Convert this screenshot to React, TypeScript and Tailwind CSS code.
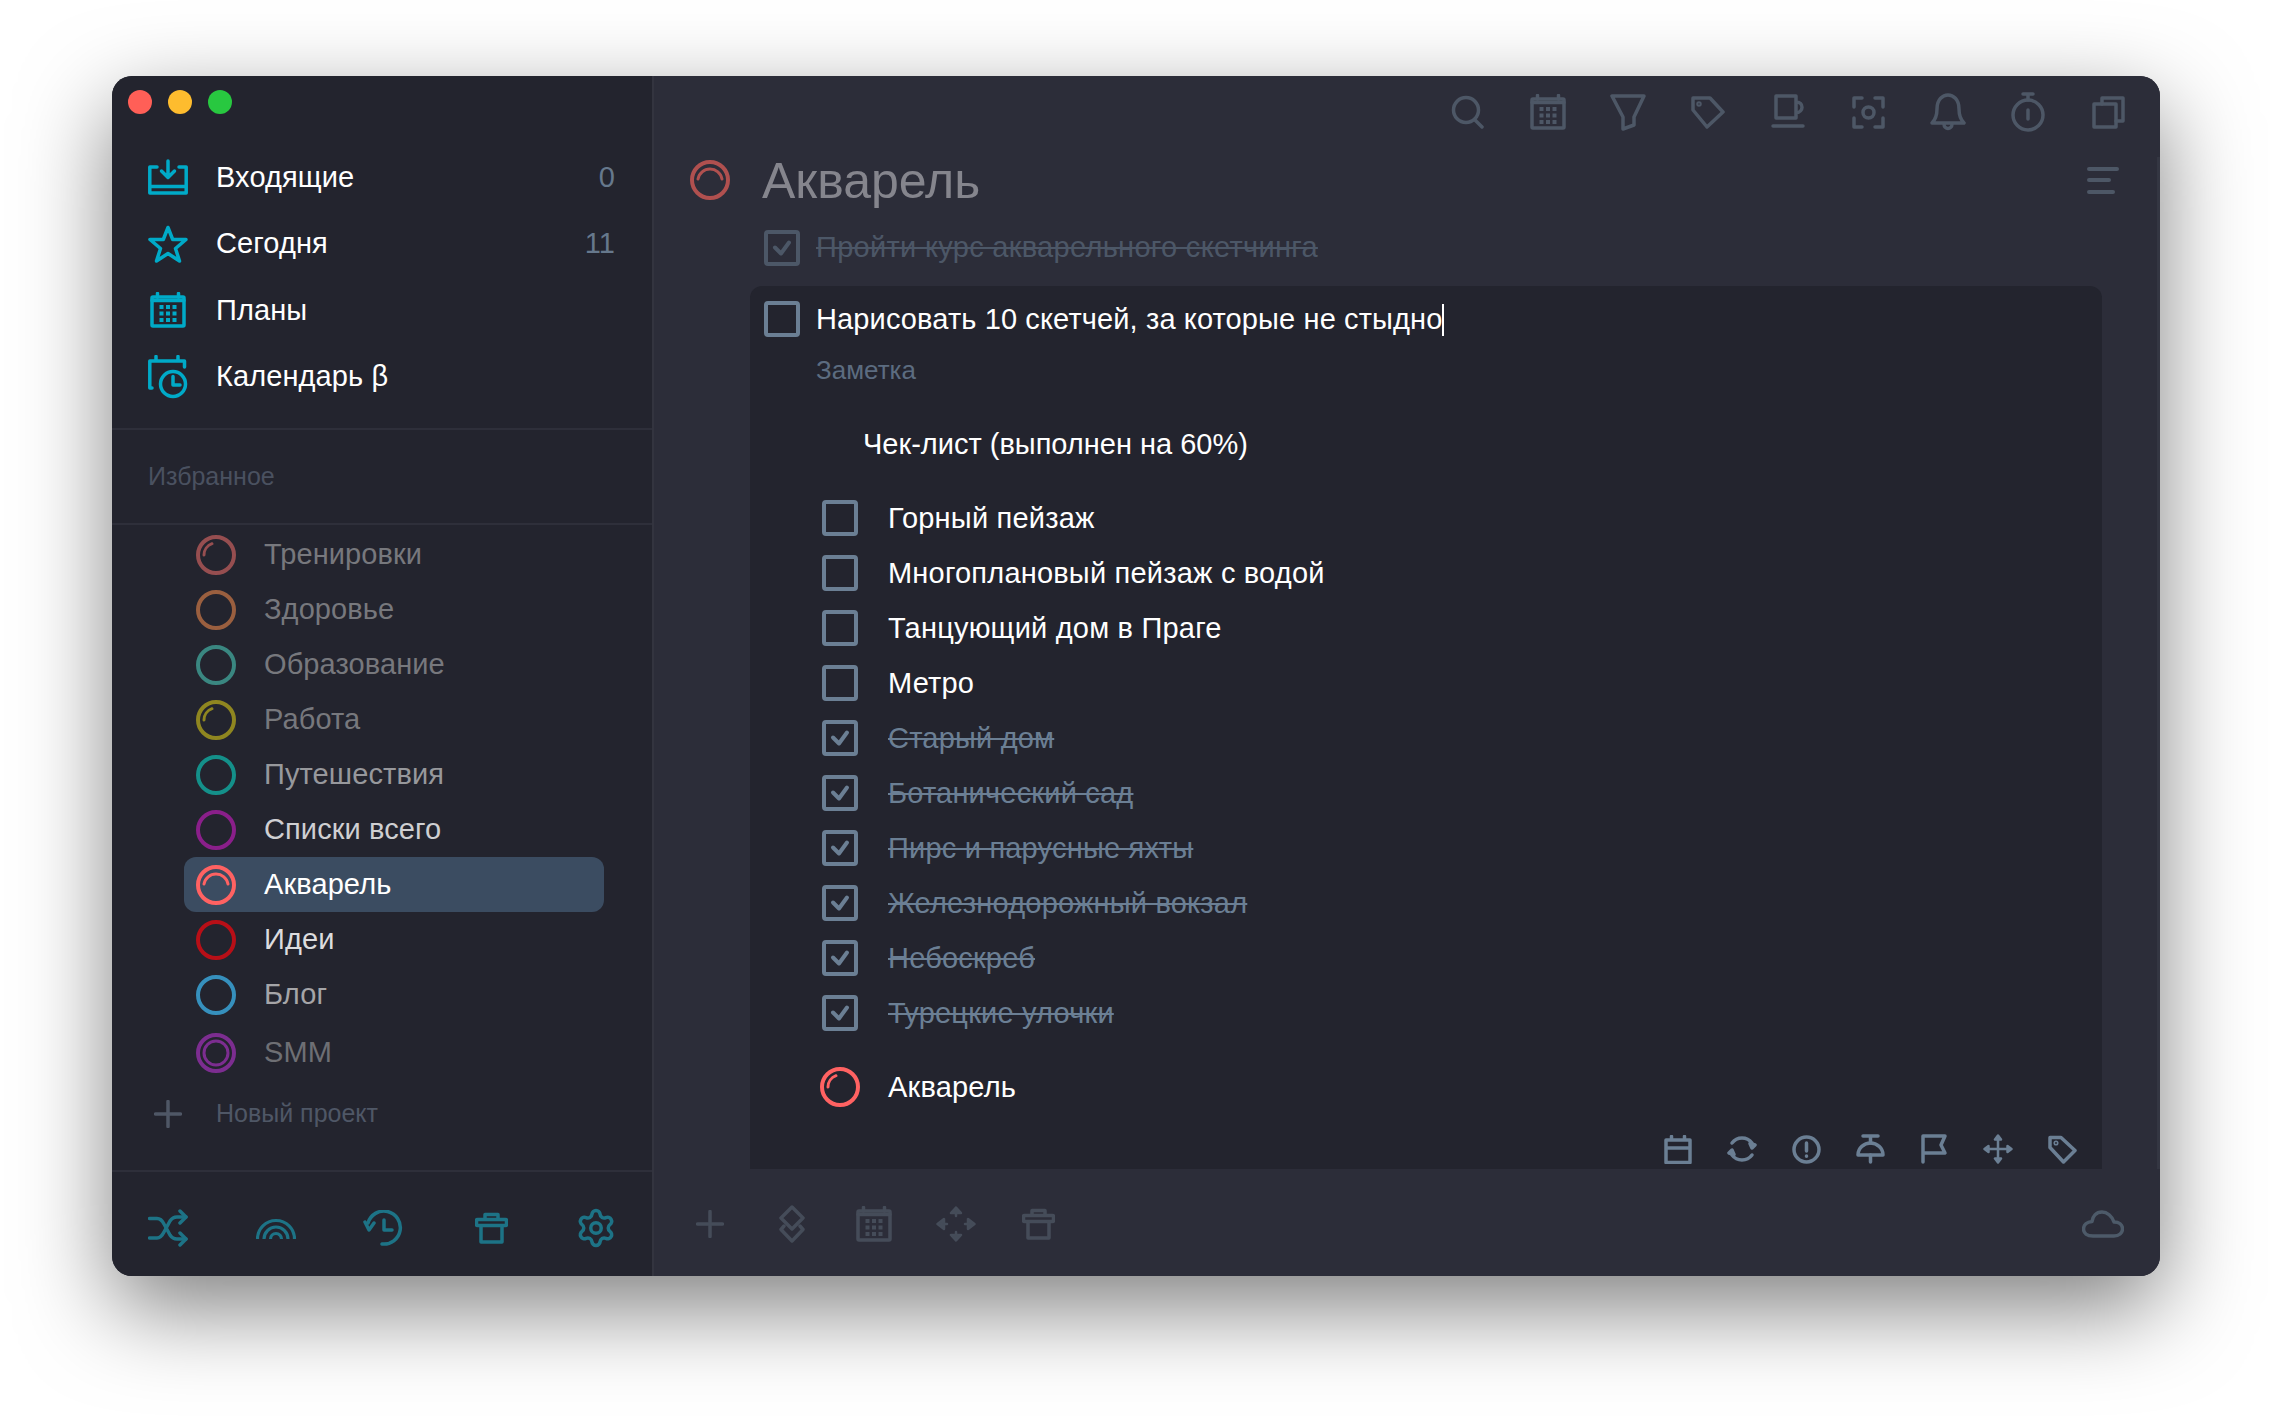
import type { ReactNode } from 'react';
import { Settings } from 'lucide-react';

const font = "font-['Liberation_Sans',Arial,sans-serif]";

interface IconProps {
  w: number;
  h: number;
  sw?: number;
  className?: string;
  children: ReactNode;
}

function Icon({ w, h, sw = 3.5, className, children }: IconProps) {
  return (
    <svg
      width={w}
      height={h}
      viewBox={`0 0 ${w} ${h}`}
      fill="none"
      stroke="currentColor"
      strokeWidth={sw}
      strokeLinecap="round"
      strokeLinejoin="round"
      className={className}
    >
      {children}
    </svg>
  );
}

function CalendarIcon({ size = 36 }: { size?: number }) {
  const dots = [15, 21.5, 28];
  return (
    <svg width={size} height={size} viewBox="0 0 36 36" fill="none" stroke="currentColor" strokeWidth={3.5} strokeLinecap="round">
      <rect x="2" y="5" width="32" height="29" rx="1" />
      <path d="M2 8.5H34M7.5 1.5V5M28.5 1.5V5" />
      {dots.flatMap(y =>
        [9.5, 16, 22.5].map(x => <rect key={`${x}-${y}`} x={x} y={y - 2} width="4" height="4" fill="currentColor" stroke="none" />)
      )}
    </svg>
  );
}

function TrashIcon() {
  return (
    <Icon w={33} h={32}>
      <path d="M10 7V2.5H23V7" />
      <rect x="1.5" y="7.5" width="30" height="6" rx="1" />
      <path d="M6 14V30H27V14" />
    </Icon>
  );
}

function Ring({ color, arc }: { color: string; arc?: 'small' | 'wide' | 'double' }) {
  return (
    <svg width="40" height="40" viewBox="0 0 40 40" fill="none" stroke={color} strokeWidth={4} strokeLinecap="round" className="shrink-0">
      <circle cx="20" cy="20" r="18" />
      {arc === 'small' && <path d="M8 20A12.2 12.2 0 0 1 16 8.7" strokeWidth={3} />}
      {arc === 'wide' && <path d="M8 19A12.2 12.2 0 0 1 32 19" strokeWidth={3} />}
      {arc === 'double' && <circle cx="20" cy="20" r="12" strokeWidth={3} />}
    </svg>
  );
}

function Checkbox({ checked, muted }: { checked?: boolean; muted?: boolean }) {
  return (
    <div
      className={`w-[36px] h-[36px] shrink-0 rounded-[4px] border-[4px] flex items-center justify-center ${
        muted ? 'border-[#4c5767] text-[#4c5767]' : 'border-[#6b7f94] text-[#6b7f94]'
      }`}
    >
      {checked && (
        <Icon w={20} h={18} sw={4}>
          <path d="M3 8.5L9 14.5L17 3.5" />
        </Icon>
      )}
    </div>
  );
}

const projects: { name: string; ring: string; text: string; arc?: 'small' | 'wide' | 'double' }[] = [
  { name: 'Тренировки', ring: '#964e50', text: 'text-[#77787d]', arc: 'small' },
  { name: 'Здоровье', ring: '#9a5f3f', text: 'text-[#77787d]' },
  { name: 'Образование', ring: '#3a8781', text: 'text-[#77787d]' },
  { name: 'Работа', ring: '#8f8620', text: 'text-[#77787d]', arc: 'small' },
  { name: 'Путешествия', ring: '#14908a', text: 'text-[#97989c]' },
  { name: 'Списки всего', ring: '#8a1f8a', text: 'text-[#cfcfd2]' },
  { name: 'Акварель', ring: '#ff6262', text: 'text-white', arc: 'wide' },
  { name: 'Идеи', ring: '#b80f17', text: 'text-[#dcdcde]' },
  { name: 'Блог', ring: '#3690bd', text: 'text-[#a5a5a8]' },
];

const checklist: { name: string; done?: boolean }[] = [
  { name: 'Горный пейзаж' },
  { name: 'Многоплановый пейзаж с водой' },
  { name: 'Танцующий дом в Праге' },
  { name: 'Метро' },
  { name: 'Старый дом', done: true },
  { name: 'Ботанический сад', done: true },
  { name: 'Пирс и парусные яхты', done: true },
  { name: 'Железнодорожный вокзал', done: true },
  { name: 'Небоскреб', done: true },
  { name: 'Турецкие улочки', done: true },
];

function Sidebar() {
  return (
    <aside className="w-[542px] shrink-0 flex flex-col bg-[#23242e] border-r-2 border-[#33343f]">
      <div className="flex gap-[16px] pt-[14px] pl-[16px]">
        <span className="w-[24px] h-[24px] rounded-full bg-[#ff5f57]" />
        <span className="w-[24px] h-[24px] rounded-full bg-[#febc2e]" />
        <span className="w-[24px] h-[24px] rounded-full bg-[#28c840]" />
      </div>

      <nav className="mt-[30px] text-white text-[29px] tracking-[0.1px]">
        <div className="h-[66.5px] flex items-center pl-[36px] pr-[37px]">
          <span className="w-[40px] flex justify-center text-[#00aac8]">
            <Icon w={40} h={36}>
              <path d="M9 8H1.800V34H38.200V8H31M1.800 27.500H38.200" />
              <path d="M20 2V18M13.500 12L20 18.500L26.500 12" />
            </Icon>
          </span>
          <span className="ml-[28px] flex-1">Входящие</span>
          <span className="text-[#66788c]">0</span>
        </div>
        <div className="h-[66.5px] flex items-center pl-[36px] pr-[37px]">
          <span className="w-[40px] flex justify-center text-[#00aac8]">
            <Icon w={40} h={38}>
              <path d="M20 2.500L24.700 14.500H38L27.500 23.500L31.500 36L20 28.500L8.500 36L12.500 23.500L2 14.500H15.300Z" />
            </Icon>
          </span>
          <span className="ml-[28px] flex-1">Сегодня</span>
          <span className="text-[#66788c]">11</span>
        </div>
        <div className="h-[66.5px] flex items-center pl-[36px]">
          <span className="w-[40px] flex justify-center text-[#00aac8]">
            <CalendarIcon />
          </span>
          <span className="ml-[28px]">Планы</span>
        </div>
        <div className="h-[66.5px] flex items-center pl-[36px]">
          <span className="w-[40px] flex justify-center text-[#00aac8]">
            <Icon w={40} h={44}>
              <path d="M4 33H1.800V6H36.500V12M8 1.500V6M30 1.500V6" />
              <circle cx="25" cy="29" r="12.500" />
              <path d="M25 21.500V30H32" />
            </Icon>
          </span>
          <span className="ml-[28px]">Календарь β</span>
        </div>
      </nav>

      <div className="mt-[18px] h-[97px] flex items-center pl-[36px] border-t-2 border-b-2 border-[#2e2f3a] text-[25px] text-[#4a5160]">
        Избранное
      </div>

      <div className="pt-[2px] text-[29px] tracking-[0.1px]">
        {projects.map(p => (
          <div
            key={p.name}
            className={`ml-[72px] w-[420px] h-[55px] pl-[12px] flex items-center gap-[28px] rounded-[12px] ${p.text} ${
              p.name === 'Акварель' ? 'bg-[#3b4c61]' : ''
            }`}
          >
            <Ring color={p.ring} arc={p.arc} />
            <span>{p.name}</span>
          </div>
        ))}
        <div className="mt-[3px] ml-[72px] h-[55px] pl-[12px] flex items-center gap-[28px] text-[#6e6f74]">
          <Ring color="#7c2d90" arc="double" />
          <span>SMM</span>
        </div>
        <div className="mt-[6px] h-[55px] pl-[36px] flex items-center text-[25px] tracking-normal text-[#4f5766]">
          <span className="w-[40px] flex justify-center">
            <Icon w={28} h={28}>
              <path d="M14 1.500V26.500M1.500 14H26.500" />
            </Icon>
          </span>
          <span className="ml-[28px]">Новый проект</span>
        </div>
      </div>

      <div className="mt-auto h-[106px] pt-[8px] pl-[36px] pr-[35px] flex items-center justify-between border-t-2 border-[#2e2f3a] text-[#1d7386]">
        <Icon w={40} h={38}>
          <path d="M1.500 9.500H9C12 9.500 14 11 16 15L22 26C24 29 26 30 29 30H38" />
          <path d="M1.500 29H9C12 29 14 27 16 23L22 12C24 9 26 8 29 8H38" />
          <path d="M32 2L38 8L32 14M32 24L38 30L32 36" />
        </Icon>
        <Icon w={40} h={22} sw={3.2} className="mt-[2px]">
          <path strokeLinecap="butt" d="M1.500 21A18.500 18.500 0 0 1 38.500 21M8 21A12 12 0 0 1 32 21M14.500 21A5.500 5.500 0 0 1 25.500 21" />
        </Icon>
        <Icon w={40} h={36} className="mr-[4px]">
          <path d="M5 13A16.500 16.500 0 1 1 19 34" />
          <path d="M2 12L6 20L11 13" />
          <path d="M21 10V20H29" />
        </Icon>
        <TrashIcon />
        <Settings size={42} strokeWidth={2} />
      </div>
    </aside>
  );
}

function TopToolbar() {
  const slot = 'w-[80px] flex justify-center';
  return (
    <div className="h-[72px] pr-[12px] flex items-center justify-end text-[#4d5766]">
      <div className={slot}>
        <Icon w={34} h={34}>
          <circle cx="15" cy="15" r="12.500" />
          <path d="M24 25L31 32" />
        </Icon>
      </div>
      <div className={slot}>
        <CalendarIcon />
      </div>
      <div className={slot}>
        <Icon w={36} h={38}>
          <path d="M2 3H34L24 24V32L13 36V24Z" />
        </Icon>
      </div>
      <div className={slot}>
        <Icon w={34} h={34}>
          <path d="M2 3H19L32 17L16 32L2 15Z" />
          <circle cx="8" cy="9" r="1" />
        </Icon>
      </div>
      <div className={slot}>
        <Icon w={34} h={36}>
          <path d="M5 2H25V24H5ZM25 8C33 8 33 18 25 19" />
          <path d="M2 32H32" />
        </Icon>
      </div>
      <div className={slot}>
        <Icon w={33} h={33}>
          <path d="M10 2H2V11M23 2H31V11M10 31H2V22M23 31H31V22" />
          <circle cx="16.500" cy="16.500" r="5.500" />
        </Icon>
      </div>
      <div className={slot}>
        <Icon w={36} h={38}>
          <path d="M2 30C5 27 7 24 7 16C7 6 13 2 18 2C23 2 29 6 29 16C29 24 31 27 34 30Z" />
          <path d="M14 31C14 37 22 37 22 31" />
        </Icon>
      </div>
      <div className={slot}>
        <Icon w={34} h={40}>
          <circle cx="17" cy="23" r="15" />
          <path d="M12 2H22M17 2V8M17 18V27" />
        </Icon>
      </div>
      <div className={slot}>
        <Icon w={33} h={33}>
          <path d="M10 8V2H31V25H24" />
          <rect x="2" y="8" width="22" height="23" />
        </Icon>
      </div>
    </div>
  );
}

function TaskCard() {
  const slot = 'w-[64px] flex justify-center';
  return (
    <div className="ml-[96px] w-[1352px] h-[883px] pl-[14px] pt-[13px] flex flex-col rounded-t-[12px] bg-[#23242e] text-white text-[29px] tracking-[0.2px]">
      <div className="h-[40px] flex items-center gap-[16px]">
        <Checkbox />
        <span className="pt-[2px] flex items-center tracking-[0.12px]">
          Нарисовать 10 скетчей, за которые не стыдно
          <span className="inline-block w-[2px] h-[32px] bg-white" />
        </span>
      </div>
      <div className="mt-[13px] h-[36px] ml-[52px] flex items-center text-[26px] tracking-normal text-[#5c6c80]">Заметка</div>
      <div className="mt-[36px] h-[40px] ml-[99px] pt-[1px] flex items-center tracking-normal">Чек-лист (выполнен на 60%)</div>

      <div className="mt-[26.5px] ml-[58px]">
        {checklist.map(item => (
          <div key={item.name} className="h-[55px] flex items-center gap-[30px]">
            <Checkbox checked={item.done} />
            <span className={`pt-[1px] ${item.done ? 'line-through text-[#6b7f94]' : ''}`}>{item.name}</span>
          </div>
        ))}
      </div>

      <div className="mt-[19px] h-[55px] ml-[56px] flex items-center gap-[28px]">
        <Ring color="#ff6262" arc="small" />
        <span className="pt-[1px]">Акварель</span>
      </div>

      <div className="mt-auto h-[40px] pr-[8px] flex items-center justify-end text-[#6b7f94]">
        <div className={slot}>
          <Icon w={28} h={29}>
            <path d="M2 5H26V27.500H2ZM2 13H26M7.500 1.500V5M20.500 1.500V5" />
          </Icon>
        </div>
        <div className={slot}>
          <Icon w={30} h={30}>
            <path d="M5 9A12.500 12.500 0 0 1 25 9" />
            <path d="M25 21A12.500 12.500 0 0 1 5 21" />
            <path d="M25 14L28 11L23 9.500Z" fill="currentColor" />
            <path d="M5 16L2 19L7 20.500Z" fill="currentColor" />
          </Icon>
        </div>
        <div className={slot}>
          <Icon w={29} h={29}>
            <circle cx="14.500" cy="14.500" r="12.500" />
            <path d="M14.500 8V16M14.500 21V21.200" />
          </Icon>
        </div>
        <div className={slot}>
          <Icon w={29} h={30}>
            <path d="M7 2H22M14.500 2V9" />
            <path d="M2 21C2 14 8 9 14.500 9C21 9 27 14 27 21Z" />
            <path d="M14.500 21V28" />
          </Icon>
        </div>
        <div className={slot}>
          <Icon w={27} h={30}>
            <path d="M2 28V2H24L20 11L24 19H2" />
          </Icon>
        </div>
        <div className={slot}>
          <Icon w={30} h={30} sw={2.500}>
            <path d="M15 3V27M3 15H27" />
            <path d="M15 1.500L12 5.500H18ZM15 28.500L12 24.500H18ZM1.500 15L5.500 12V18ZM28.500 15L24.500 12V18Z" fill="currentColor" />
          </Icon>
        </div>
        <div className={slot}>
          <Icon w={29} h={29}>
            <path d="M2 2.500H13L27 15.500L15.500 27L2 12.500Z" />
            <circle cx="8" cy="8" r="0.800" />
          </Icon>
        </div>
      </div>
    </div>
  );
}

export default function App() {
  return (
    <div className={`w-[2272px] h-[1424px] bg-white pt-[76px] pl-[112px] overflow-hidden ${font}`}>
      <div className="w-[2048px] h-[1200px] flex overflow-hidden rounded-[20px] shadow-[0_32px_90px_rgba(0,0,0,0.5)] bg-[#2c2d39]">
        <Sidebar />
        <main className="relative flex-1 flex flex-col bg-[#2c2d39]">
          <TopToolbar />
          <div className="h-[64px] pl-[36px] pr-[41px] flex items-center">
            <Ring color="#b0504f" arc="wide" />
            <h1 className="ml-[32px] flex-1 pt-[2px] text-[50px] text-[#85858d]">Акварель</h1>
            <div className="flex flex-col gap-[7.5px]">
              <span className="block w-[32px] h-[4px] rounded-full bg-[#4d5766]" />
              <span className="block w-[24px] h-[4px] rounded-full bg-[#4d5766]" />
              <span className="block w-[28px] h-[4px] rounded-full bg-[#4d5766]" />
            </div>
          </div>
          <div className="mt-[6px] h-[60px] mb-[8px] pl-[110px] flex items-center gap-[16px] text-[29px] tracking-[0.3px] text-[#4c5767]">
            <Checkbox checked muted />
            <span className="line-through">Пройти курс акварельного скетчинга</span>
          </div>
          <TaskCard />
          <div className="flex-1 pl-[36px] pr-[36px] pt-[3px] flex items-center text-[#454c59]">
            <span className="w-[40px] flex justify-center">
              <Icon w={28} h={28}>
                <path d="M14 1.500V26.500M1.500 14H26.500" />
              </Icon>
            </span>
            <span className="ml-[42px] w-[40px] flex justify-center">
              <Icon w={28} h={38}>
                <path d="M14 2L25 13L14 24L3 13Z" />
                <path d="M6 21L3 24.500L14 36L25 24.500L22 21" />
              </Icon>
            </span>
            <span className="ml-[42px] w-[40px] flex justify-center">
              <CalendarIcon />
            </span>
            <span className="ml-[42px] w-[40px] flex justify-center">
              <Icon w={40} h={36} sw={2.500}>
                <path d="M20 1.500L15 7H25ZM20 34.500L15 29H25ZM1.500 18L8 13V23ZM38.500 18L32 13V23Z" fill="currentColor" />
                <path d="M20 7V10M20 26V29M8 18H11M29 18H32" />
              </Icon>
            </span>
            <span className="ml-[42px] w-[40px] flex justify-center">
              <TrashIcon />
            </span>
            <span className="ml-auto text-[#4d5a69]">
              <Icon w={42} h={28}>
                <path d="M11 26H32C37 26 40.500 23 40.500 19C40.500 14.500 37 12 32 12C30 6 25 2 20 2C14 2 10.500 6.500 10 11.500C5 12 1.500 15 1.500 19C1.500 23 5 26 11 26Z" />
              </Icon>
            </span>
          </div>
          <div className="absolute right-0 top-[81px] h-[1012px] w-[3px] bg-[#343642]" />
        </main>
      </div>
    </div>
  );
}
